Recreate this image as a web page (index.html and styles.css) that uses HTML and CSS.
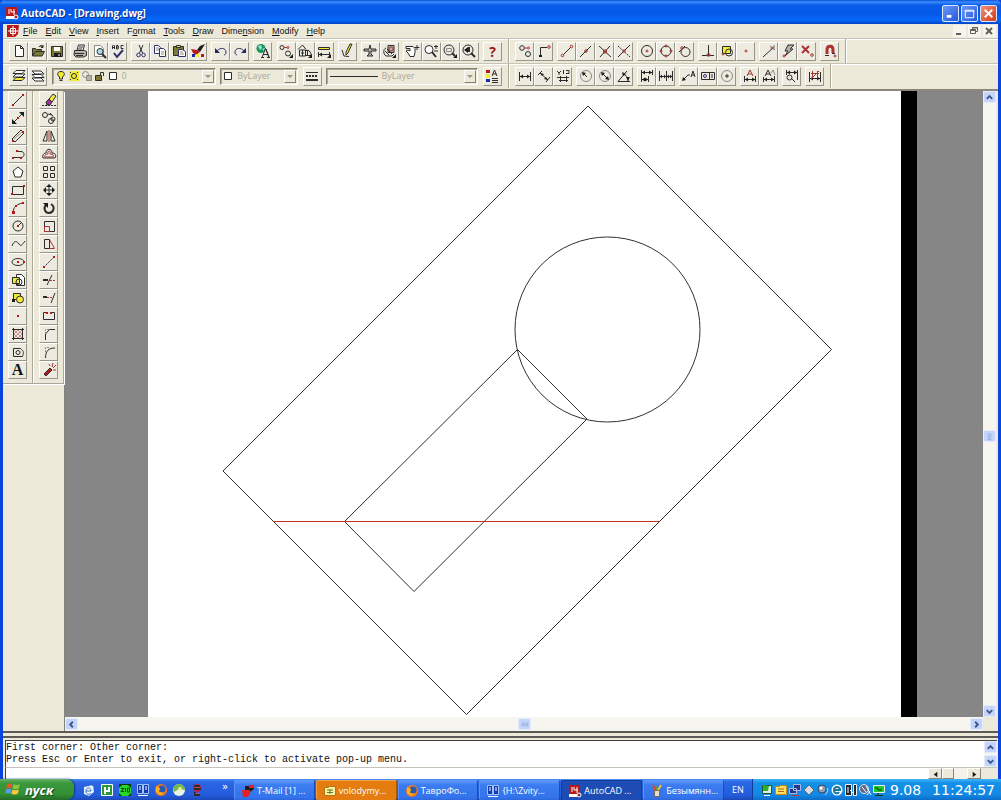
FILE: index.html
```html
<!DOCTYPE html>
<html lang="en">
<head>
<meta charset="utf-8">
<title>AutoCAD - [Drawing.dwg]</title>
<link rel="stylesheet" href="styles.css">
</head>
<body>
<div class="window">
  <header class="titlebar">
    <svg class="icon14" viewBox="0 0 14 14"><path class="fr" d="M1 1h11v11H1z"/><path class="w" d="M4 3v5M6 3v3h4M9 3v6"/><path class="fw" d="M1 10h8v3H1z"/><circle class="w" cx="11" cy="11" r="2"/></svg>
    <h1>AutoCAD - [Drawing.dwg]</h1>
    <button class="cap" aria-label="Minimize"><svg viewBox="0 0 16 16"><path class="w t3" d="M4 11h5"/></svg></button>
    <button class="cap" aria-label="Maximize"><svg viewBox="0 0 16 16"><path class="w" d="M3.500 4.500h9v8h-9zM3 5.500h10"/></svg></button>
    <button class="cap close" aria-label="Close"><svg viewBox="0 0 16 16"><path class="w t2" d="M4 4l8 8M12 4l-8 8"/></svg></button>
  </header>
  <nav class="menubar">
    <svg class="icon14" viewBox="0 0 14 14"><path class="fr" d="M1 1h12l-1 9-3 3H1z"/><path class="w" d="M7 2v10M2 7h10M4.500 4.500h5v5h-5z"/></svg>
    <button><u>F</u>ile</button><button><u>E</u>dit</button><button><u>V</u>iew</button><button><u>I</u>nsert</button><button>F<u>o</u>rmat</button><button><u>T</u>ools</button><button><u>D</u>raw</button><button>Dime<u>n</u>sion</button><button><u>M</u>odify</button><button><u>H</u>elp</button>
    <span class="grow"></span>
    <button class="mdi" aria-label="Minimize drawing"><svg viewBox="0 0 12 12"><path class="g t2" d="M3 9h5"/></svg></button>
    <button class="mdi" aria-label="Restore drawing"><svg viewBox="0 0 12 12"><path class="g" d="M4.500 4V2.500h5v4H8M2.500 4.500h5v4h-5zM2 5.500h6M4 3h6"/></svg></button>
    <button class="mdi" aria-label="Close drawing"><svg viewBox="0 0 12 12"><path class="g t2" d="M3 3l6 6M9 3l-6 6"/></svg></button>
  </nav>

  <div class="toolrow">
    <div class="toolbar standard">
      <div class="group">
        <button class="tb" aria-label="New"><svg viewBox="0 0 16 16"><path class="k fw" d="M4.500 2.500h5l3 3v8h-8zM9.500 2.500v3h3"/></svg></button>
        <button class="tb" aria-label="Open"><svg viewBox="0 0 16 16"><path class="k fo" d="M2.500 13V5.500h3l1 1h5V9M2.500 13l3-4.500h9L12 13zM9 4c1-2 3-2 4 0M13 2v2.500h-2"/></svg></button>
        <button class="tb" aria-label="Save"><svg viewBox="0 0 16 16"><path class="k fo" d="M2.500 3.500h11v10h-11z"/><path class="fw" d="M5 4h6v4H5z"/><path class="fk" d="M5 10h7v4H5z"/><path class="w" d="M10 11v2"/></svg></button>
      </div>
      <div class="group">
        <button class="tb" aria-label="Print"><svg viewBox="0 0 16 16"><path class="k fw" d="M5 7l1.500-5h6L11 7"/><path class="k fs" d="M2.500 7.500h10l2 1v4l-3 1.500H4L2 12z"/><path class="k" d="M3 10.500h9M7 4h4M6 6h4M4 12.500h7"/></svg></button>
        <button class="tb" aria-label="Print preview"><svg viewBox="0 0 16 16"><path class="s fw" d="M3.500 2.500h6l3 3v8h-9z"/><circle class="k fc" cx="9" cy="8.500" r="3"/><path class="k t2" d="M11 11l4 4"/></svg></button>
        <button class="tb" aria-label="Spelling"><svg viewBox="0 0 16 16"><path class="k" d="M2.500 6V3l1-1 1 1v3M2.500 4.500h2M6.500 6V2.500H8L8.500 4 8 6H6.500M6.500 4H8M13.500 2.500H11v3h2.500"/><path class="b t2" d="M4 10l3 4 6-7"/></svg></button>
      </div>
      <div class="group">
        <button class="tb" aria-label="Cut"><svg viewBox="0 0 16 16"><path class="k" d="M6 2l3.500 8M10 2L6.500 10"/><circle class="b" cx="5.500" cy="12" r="1.800"/><circle class="b" cx="10.500" cy="12" r="1.800"/></svg></button>
        <button class="tb" aria-label="Copy"><svg viewBox="0 0 16 16"><path class="b fw" d="M2.500 2.500h4l2 2v6h-6z"/><path class="b fw" d="M7.500 5.500h4l2 2v6h-6z"/><path class="s" d="M4 5h3M4 7h3M9 9h3M9 11h3"/></svg></button>
        <button class="tb" aria-label="Paste"><svg viewBox="0 0 16 16"><path class="k fo" d="M2.500 3.500h10v9h-10z"/><path class="k fy" d="M5.500 2.500h4v2h-4z"/><path class="b fw" d="M7.500 6.500h4l3 2v5h-7z"/><path class="s" d="M9 9h3M9 11h4"/></svg></button>
        <button class="tb" aria-label="Match properties"><svg viewBox="0 0 16 16"><path class="fk" d="M15 1l-5 8-3-2 3-4z"/><path class="fr" d="M1 6l6 1 3 2-4 3-3-2z"/><path class="fb" d="M2 11h3v3H2z"/><path class="fy" d="M6 11h3v3H6z"/><path class="fr" d="M11 11h3v3h-3z"/></svg></button>
      </div>
      <div class="group">
        <button class="tb" aria-label="Undo"><svg viewBox="0 0 16 16"><path class="b" d="M4 8c3-4 9-3 9 1 0 2-1 3-2 3"/><path class="bk" d="M2 5v5h5z"/></svg></button>
        <button class="tb" aria-label="Redo"><svg viewBox="0 0 16 16"><path class="b" d="M12 8C9 4 3 5 3 9c0 2 1 3 2 3"/><path class="bk" d="M14 5v5H9z"/></svg></button>
      </div>
      <div class="group">
        <button class="tb" aria-label="Launch browser"><svg viewBox="0 0 16 16"><circle class="fgn" cx="6" cy="5.500" r="4.500"/><path class="fc" d="M3 3l3-1 1 3-2 2zM7 6l3-1-1 3z"/><path class="k" d="M7 14.500l3.500-9 3.500 9M8 11.500h5M6 14.500h3M12 14.500h3M11 6l3 8"/></svg></button>
      </div>
      <div class="group">
        <button class="tb" aria-label="Object snap"><svg viewBox="0 0 16 16"><circle class="k" cx="4" cy="4.500" r="2"/><circle class="k" cx="10" cy="10.500" r="2.500"/><circle class="r" cx="10" cy="4.500" r="1"/><path class="r" d="M6 4.500h3"/><path class="fk" d="M15 11v4h-4z"/></svg></button>
        <button class="tb" aria-label="UCS"><svg viewBox="0 0 16 16"><path class="k" d="M1 6.500L5.500 2 9 6.500M2.500 7h6v6h-6zM4 10h3M5.500 7v6M9 7.500h3l2 3v2H9M10.500 8v4"/><path class="fk" d="M15 11v4h-4z"/></svg></button>
        <button class="tb" aria-label="Distance"><svg viewBox="0 0 16 16"><path class="k fy" d="M2.500 4.500h11v2h-11z"/><path class="k" d="M2.500 9v5M13.500 9v4M3 11.500h10"/><path class="fk" d="M3 11.500l3-2v4zM15 11v4h-4z"/></svg></button>
      </div>
      <div class="group">
        <button class="tb" aria-label="Redraw"><svg viewBox="0 0 16 16"><path class="k fy" d="M13 1L9 10l-2 2V9l4-8z"/><path class="k" d="M3 7l2 6 5 .5"/></svg></button>
      </div>
      <div class="group">
        <button class="tb" aria-label="Aerial view"><svg viewBox="0 0 16 16"><path class="k fs" d="M8 2l1 4h5v2H9v3l2 2H5l2-2V8H2V6h5z"/></svg></button>
        <button class="tb" aria-label="Named views"><svg viewBox="0 0 16 16"><path class="k fs" d="M7 2.500h6v7H7z"/><path class="k" d="M5 5c-3 1-3 6 0 8h6l2-2M4 8l4 4M6 6l5 5"/><circle class="r" cx="10" cy="6" r="2"/><path class="fk" d="M15 11v4h-4z"/></svg></button>
      </div>
      <div class="group">
        <button class="tb" aria-label="Pan"><svg viewBox="0 0 16 16"><path class="k fw" d="M2 3.500h7l2 2v4l-1 4H6L4 10 2 8l2-1 2 1V5.500H2z"/><path class="k" d="M13 2v5M10.500 4.500h5"/></svg></button>
        <button class="tb" aria-label="Zoom realtime"><svg viewBox="0 0 16 16"><circle class="k fw" cx="6" cy="6.500" r="4"/><path class="k t2" d="M9 9l4 5"/><path class="k" d="M11 3.500h4M13 2v4M11 8h4"/></svg></button>
        <button class="tb" aria-label="Zoom window"><svg viewBox="0 0 16 16"><circle class="k" cx="7" cy="7" r="5"/><path class="s" d="M4.500 5.500h5v3h-5z"/><path class="k t2" d="M10 10l3 3"/><path class="fk" d="M15 11v4h-4z"/></svg></button>
        <button class="tb" aria-label="Zoom previous"><svg viewBox="0 0 16 16"><circle class="k" cx="7" cy="7" r="5"/><path class="k t2" d="M10 10l4 4M8 4v5"/><path class="fk" d="M3 7l4-3v6z"/></svg></button>
      </div>
      <div class="group">
        <button class="tb help" aria-label="Help">?</button>
      </div>
    </div>
    <div class="toolbar snap">
      <div class="group">
        <button class="tb" aria-label="Tracking"><svg viewBox="0 0 16 16"><circle class="k" cx="5" cy="5" r="2.300"/><circle class="k" cx="11" cy="11" r="2.500"/><circle class="r" cx="11.500" cy="5" r="1"/><path class="r" d="M7 5h3"/></svg></button>
        <button class="tb" aria-label="Snap from"><svg viewBox="0 0 16 16"><path class="k" d="M4.500 13V4.500H11"/><path class="fk" d="M3 12h3v2H3z"/><circle class="r" cx="13" cy="4" r="1.300"/></svg></button>
      </div>
      <div class="group">
        <button class="tb" aria-label="Endpoint"><svg viewBox="0 0 16 16"><path class="k" d="M4 12l8-8"/><circle class="r" cx="3.500" cy="12.500" r="1.300"/><circle class="r" cx="12.500" cy="3.500" r="1.300"/></svg></button>
        <button class="tb" aria-label="Midpoint"><svg viewBox="0 0 16 16"><path class="k" d="M2 14L13 3"/><circle class="r" cx="8" cy="8" r="1.300"/></svg></button>
        <button class="tb" aria-label="Intersection"><svg viewBox="0 0 16 16"><path class="k" d="M2 3l12 11M13 3L3 14"/><path class="r" d="M6.500 7h3v3h-3z"/></svg></button>
        <button class="tb" aria-label="Apparent intersection"><svg viewBox="0 0 16 16"><path class="k dash" d="M2 3l12 11"/><path class="k" d="M14 2L2 14"/><path class="r" d="M7 7h2v2H7z"/></svg></button>
      </div>
      <div class="group">
        <button class="tb" aria-label="Center"><svg viewBox="0 0 16 16"><circle class="k" cx="8" cy="8" r="5.500"/><circle class="r" cx="8" cy="8" r="1"/></svg></button>
        <button class="tb" aria-label="Quadrant"><svg viewBox="0 0 16 16"><circle class="k" cx="8" cy="8" r="5"/><circle class="r" cx="8" cy="3" r="1"/><circle class="r" cx="8" cy="13" r="1"/><circle class="r" cx="3" cy="8" r="1"/><circle class="r" cx="13" cy="8" r="1"/></svg></button>
        <button class="tb" aria-label="Tangent"><svg viewBox="0 0 16 16"><circle class="k" cx="8.500" cy="9" r="4.500"/><path class="k" d="M2 9l6-6"/><circle class="r" cx="5" cy="5" r="1.300"/></svg></button>
      </div>
      <div class="group">
        <button class="tb" aria-label="Perpendicular"><svg viewBox="0 0 16 16"><path class="k" d="M2 12.500h12M8.500 2v10"/><path class="r" d="M7 11h3v2H7z"/></svg></button>
        <button class="tb" aria-label="Insert snap"><svg viewBox="0 0 16 16"><path class="k fy" d="M3.500 3.500h8v7h-8z"/><circle class="k" cx="10" cy="9.500" r="3.500"/><circle class="r" cx="4" cy="11" r="1"/></svg></button>
        <button class="tb" aria-label="Node"><svg viewBox="0 0 16 16"><circle class="r" cx="8" cy="8" r="1"/></svg></button>
      </div>
      <div class="group">
        <button class="tb" aria-label="Nearest"><svg viewBox="0 0 16 16"><path class="k" d="M2 14L13 4"/><circle class="r" cx="11" cy="5" r="1"/><path class="s" d="M9 3l5 4M13 2v5"/></svg></button>
        <button class="tb" aria-label="Quick"><svg viewBox="0 0 16 16"><path class="k fs" d="M8 2h6l-4 4h3L5 13l3-5H5z"/><circle class="r" cx="4" cy="13" r="1"/></svg></button>
        <button class="tb" aria-label="None"><svg viewBox="0 0 16 16"><path class="r t2" d="M3 3l7 7M10 3l-7 7"/><circle class="r" cx="13" cy="12" r="1.300"/></svg></button>
      </div>
      <div class="group">
        <button class="tb" aria-label="Object snap settings"><svg viewBox="0 0 16 16"><path class="r t3" d="M5 11V7c0-5 6-5 6 0v3"/><path class="k" d="M3 12.500h4M10 10.500h3"/><circle class="r" cx="13" cy="13" r="1"/></svg></button>
      </div>
    </div>
  </div>

  <div class="toolrow">
    <div class="toolbar props">
      <div class="group">
        <button class="tb" aria-label="Make object's layer current"><svg viewBox="0 0 16 16"><path class="k fy" d="M2 12.500l3-3h9l-3 3z"/><path class="k fw" d="M2 9l3-3h9l-3 3zM2 5.500l3-3h9l-3 3z"/></svg></button>
        <button class="tb" aria-label="Layers"><svg viewBox="0 0 16 16"><path class="k fw" d="M5 13l-3-3h9l3 3zM5 9.500l-3-3h9l3 3zM5 6L2 3h9l3 3z"/></svg></button>
      </div>
      <label class="combo layer">
        <svg viewBox="0 0 12 12"><path class="k fy" d="M4.500 9V7C1 4 3 1.500 6 1.500S11 4 7.500 7v2z"/><path class="k" d="M4.500 10.500h3"/></svg>
        <svg viewBox="0 0 12 12"><path class="fy" d="M1 1h10v10H1z"/><circle class="k" cx="6" cy="6" r="2.500"/><path class="k" d="M2 2l1 1M10 2L9 3M2 10l1-1M10 10L9 9"/></svg>
        <svg viewBox="0 0 12 12"><circle class="s" cx="4.500" cy="4.500" r="3"/><path class="s fs" d="M5.500 5.500h5v5h-5z"/></svg>
        <svg viewBox="0 0 12 12"><path class="k fo" d="M1.500 5.500h6v5h-6z"/><path class="k" d="M6.500 5V2.500h3V6"/></svg>
        <svg viewBox="0 0 12 12"><path class="k fw" d="M2.500 2.500h7v7h-7z"/></svg>
        <select aria-label="Layer" disabled><option>0</option></select><span class="drop"></span>
      </label>
      <label class="combo color">
        <svg viewBox="0 0 12 12"><path class="k fw" d="M2.500 2.500h7v7h-7z"/></svg>
        <select aria-label="Color" disabled><option>ByLayer</option></select><span class="drop"></span>
      </label>
      <button class="tb" aria-label="Linetype"><svg viewBox="0 0 16 16"><path class="k" d="M2 4.500h12"/><path class="k t2 dash" d="M2 8h12"/><path class="k t2" d="M2 12h12"/></svg></button>
      <label class="combo line">
        <svg class="sample" viewBox="0 0 50 12"><path class="k" d="M2 6.500h48"/></svg>
        <select aria-label="Linetype" disabled><option>ByLayer</option></select><span class="drop"></span>
      </label>
      <button class="tb" aria-label="Properties"><svg viewBox="0 0 16 16"><path class="fr" d="M2 2h4v3H2z"/><path class="fy" d="M2 6h4v4H2z"/><path class="fb" d="M2 11h4v3H2z"/><path class="k" d="M8 8l2.500-6L13 8M9 6h3M8 10.500h6M8 12.500h6M8 14.500h6"/></svg></button>
    </div>
    <div class="toolbar dims">
      <div class="group">
        <button class="tb" aria-label="Linear dimension"><svg viewBox="0 0 16 16"><path class="k" d="M2.500 4v9M13.500 4v9M3 8.500h10"/><path class="fk" d="M3 8.500l3-2v4zM13 8.500l-3-2v4z"/></svg></button>
        <button class="tb" aria-label="Aligned dimension"><svg viewBox="0 0 16 16"><path class="k" d="M2 7l4-4M10 14l4-5M4 5l8 7"/><path class="fk" d="M4 5l4 1-2 2zM12 12L8 11l2-2z"/></svg></button>
        <button class="tb" aria-label="Ordinate dimension"><svg viewBox="0 0 16 16"><path class="k" d="M2 9.500h12M4 12.500h9M5.500 8v6M11.500 8v6M8.500 2v4M2 3l2 2 2-2M4 5v2M11 2.500h3v3h-3"/></svg></button>
      </div>
      <div class="group">
        <button class="tb" aria-label="Radius dimension"><svg viewBox="0 0 16 16"><circle class="s" cx="8" cy="8" r="5.500"/><path class="k" d="M5 5l4 4"/><path class="fk" d="M4 4l4 1-3 3z"/></svg></button>
        <button class="tb" aria-label="Diameter dimension"><svg viewBox="0 0 16 16"><circle class="s" cx="8" cy="8" r="5.500"/><path class="k" d="M5 5l6 6"/><path class="fk" d="M4 4l4 1-3 3zM12 12l-4-1 3-3z"/></svg></button>
        <button class="tb" aria-label="Angular dimension"><svg viewBox="0 0 16 16"><path class="k" d="M14 13.500H2L11 3M7 6c3 1 5 3 5 7"/><path class="fk" d="M6 4l4 2-3 2zM10 9h4l-2 4z"/></svg></button>
      </div>
      <div class="group">
        <button class="tb" aria-label="Baseline dimension"><svg viewBox="0 0 16 16"><path class="k" d="M2.500 2v12M13.500 2v5M9.500 8v6M3 4.500h10M3 11.500h6"/><path class="fk" d="M3 4.500l3-2v4zM13 4.500l-3-2v4zM3 11.500l3-2v4zM9 11.500l-3-2v4z"/></svg></button>
        <button class="tb" aria-label="Continue dimension"><svg viewBox="0 0 16 16"><path class="k" d="M1.500 3v10M8.500 3v10M14.500 3v10M2 8.500h12"/><path class="fk" d="M2 8.500l2-2v4zM8 8.500l-2-2v4zM9 8.500l2-2v4zM14 8.500l-2-2v4z"/></svg></button>
      </div>
      <div class="group">
        <button class="tb" aria-label="Leader"><svg viewBox="0 0 16 16"><path class="k" d="M2 12l5-5h2M10 9l2-6 2 6M11 7h3"/><path class="fk" d="M1 13l1-4 3 3z"/></svg></button>
        <button class="tb" aria-label="Tolerance"><svg viewBox="0 0 16 16"><path class="k" d="M1.500 4.500h13v7h-13zM9.500 5v6M12 6v4"/><circle class="b" cx="5" cy="8" r="1.500"/></svg></button>
        <button class="tb" aria-label="Center mark"><svg viewBox="0 0 16 16"><circle class="s" cx="8" cy="8" r="5.500"/><path class="k" d="M8 6v4M6 8h4"/></svg></button>
      </div>
      <div class="group">
        <button class="tb" aria-label="Dimension edit"><svg viewBox="0 0 16 16"><path class="r" d="M5 8l3-6 3 6M6 6h4"/><path class="k" d="M2.500 8v6M13.500 8v6M3 11.500h10"/><path class="fk" d="M3 11.500l3-2v4zM13 11.500l-3-2v4z"/></svg></button>
        <button class="tb" aria-label="Dimension text edit"><svg viewBox="0 0 16 16"><path class="k" d="M4 8l3-6 3 6M5 6h4M2.500 9v5M13.500 8v6M3 11.500h10"/><path class="s" d="M10 5l2-3 2 5"/><path class="fk" d="M3 11.500l3-2v4zM13 11.500l-3-2v4z"/></svg></button>
      </div>
      <div class="group">
        <button class="tb" aria-label="Dimension style"><svg viewBox="0 0 16 16"><path class="k" d="M2.500 2v5M13.500 2v10M3 4.500h10M7 10l4 4"/><circle class="k" cx="5.500" cy="9.500" r="2.500"/><path class="fk" d="M3 4.500l3-2v4zM13 4.500l-3-2v4z"/></svg></button>
      </div>
      <div class="group">
        <button class="tb" aria-label="Dimension update"><svg viewBox="0 0 16 16"><path class="k" d="M2.500 4v10M13.500 4v10M3 10.500h10"/><path class="fk" d="M3 10.500l3-2v4zM13 10.500l-3-2v4z"/><path class="r" d="M5.500 3v7M10.500 3v7M4 5.500h8M12 3l-8 8"/></svg></button>
      </div>
    </div>
  </div>

  <main class="workspace">
    <aside class="palettes">
      <div class="palette">
        <button class="tb" aria-label="Line"><svg viewBox="0 0 16 16"><path class="k" d="M4 12l9-9"/><path class="fr" d="M2 12h2v2H2zM12 2h2v2h-2z"/></svg></button>
        <button class="tb" aria-label="Construction line"><svg viewBox="0 0 16 16"><path class="k" d="M3 13L13 3"/><path class="fk" d="M2 14v-5l5 5zM14 2v5L9 2z"/><path class="fr" d="M7 7h2v2H7z"/></svg></button>
        <button class="tb" aria-label="Multiline"><svg viewBox="0 0 16 16"><path class="k" d="M2 11l9-9 3 3-9 9z"/><path class="s" d="M4 11l8-7"/><path class="fr" d="M2 12h2v2H2zM12 3h2v2h-2z"/></svg></button>
        <button class="tb" aria-label="Polyline"><svg viewBox="0 0 16 16"><path class="k" d="M2 11.500h9c4 0 4-6 0-6H7"/><path class="fr" d="M2 11h2v2H2zM10 11h2v2h-2zM6 4h2v2H6z"/></svg></button>
        <button class="tb" aria-label="Polygon"><svg viewBox="0 0 16 16"><path class="k fw" d="M8 3l5 4-2 6H5L3 7z"/></svg></button>
        <button class="tb" aria-label="Rectangle"><svg viewBox="0 0 16 16"><path class="k" d="M2.500 4.500h11v8h-11z"/><path class="fr" d="M1 11h2v2H1zM13 3h2v2h-2z"/></svg></button>
        <button class="tb" aria-label="Arc"><svg viewBox="0 0 16 16"><path class="k" d="M3 13c0-6 4-9 10-10"/><path class="fr" d="M2 11h3v3H2zM5 5h2v2H5zM12 2h2v2h-2z"/></svg></button>
        <button class="tb" aria-label="Circle"><svg viewBox="0 0 16 16"><circle class="k" cx="8" cy="8" r="5"/><path class="k" d="M8 8l3-3"/><path class="fr" d="M7 7h2v2H7z"/></svg></button>
        <button class="tb" aria-label="Spline"><svg viewBox="0 0 16 16"><path class="k" d="M2 10c2-6 5-5 7-2s3 1 6-3"/></svg></button>
        <button class="tb" aria-label="Ellipse"><svg viewBox="0 0 16 16"><ellipse class="k" cx="8" cy="8" rx="6" ry="3.500"/><path class="fr" d="M7 7h2v2H7zM7 4h2v1H7zM13 7h2v2h-2z"/></svg></button>
        <button class="tb" aria-label="Insert block"><svg viewBox="0 0 16 16"><path class="k fw" d="M6.500 2.500h5l3 3v8h-8z"/><path class="k fy" d="M2.500 5.500h7v6h-7z"/><circle class="k" cx="9" cy="10" r="3"/></svg></button>
        <button class="tb" aria-label="Make block"><svg viewBox="0 0 16 16"><path class="k fy" d="M3.500 3.500h7v6h-7z"/><circle class="k fy" cx="10" cy="9.500" r="3.500"/><path class="fk" d="M2 9h3v3H2z"/></svg></button>
        <button class="tb" aria-label="Point"><svg viewBox="0 0 16 16"><path class="fr" d="M7 7h2v2H7z"/></svg></button>
        <button class="tb" aria-label="Hatch"><svg viewBox="0 0 16 16"><path class="r thin" d="M4 8l4-4M4 12l8-8M8 12l4-4M4 8l4 4M4 4l8 8M8 4l4 4"/><path class="k" d="M3.500 2v12M12.500 2v12M2 3.500h12M2 12.500h12"/></svg></button>
        <button class="tb" aria-label="Region"><svg viewBox="0 0 16 16"><path class="k" d="M3.500 4.500h7c4 3 3 5 2 8h-9z"/><circle class="k" cx="8" cy="8.500" r="2"/></svg></button>
        <button class="tb letter" aria-label="Text">A</button>
      </div>
      <div class="palette modify">
        <button class="tb" aria-label="Erase"><svg viewBox="0 0 16 16"><path class="k dash" d="M1 13.500h14"/><path class="k fp" d="M5 10l3-3 3 3-2 3H6z"/><path class="k fy" d="M8 7l4-5 3 2-4 6z"/></svg></button>
        <button class="tb" aria-label="Copy object"><svg viewBox="0 0 16 16"><circle class="k" cx="4" cy="5" r="2.500"/><circle class="k" cx="10" cy="11" r="2.500"/><circle class="k" cx="12" cy="9" r="2"/><path class="k" d="M7 4l4 1M9 3l3 3"/></svg></button>
        <button class="tb" aria-label="Mirror"><svg viewBox="0 0 16 16"><path class="k" d="M6 3v10H2zM10 3v10h4z"/><path class="r" d="M8 2v12"/></svg></button>
        <button class="tb" aria-label="Offset"><svg viewBox="0 0 16 16"><path class="k" d="M2 12c-1-3 1-5 3-5 0-5 6-5 6 0 3 0 5 2 3 5z"/><path class="r" d="M4 11c-1-2 1-3 3-3-1-4 3-4 2 0 3 0 4 1 3 3z"/></svg></button>
        <button class="tb" aria-label="Array"><svg viewBox="0 0 16 16"><path class="k" d="M2.500 2.500h4v4h-4zM9.500 2.500h4v4h-4zM2.500 9.500h4v4h-4zM9.500 9.500h4v4h-4z"/></svg></button>
        <button class="tb" aria-label="Move"><svg viewBox="0 0 16 16"><path class="k" d="M8 3v10M3 8h10"/><path class="fk" d="M8 2l3 3H5zM8 14l-3-3h6zM2 8l3-3v6zM14 8l-3 3V5z"/></svg></button>
        <button class="tb" aria-label="Rotate"><svg viewBox="0 0 16 16"><path class="k t2" d="M10 4c5 3 2 9-2 9s-6-5-3-8"/><path class="fk" d="M2 3h5v5z"/></svg></button>
        <button class="tb" aria-label="Scale"><svg viewBox="0 0 16 16"><path class="k" d="M3.500 3.500h10v10h-10z"/><path class="r" d="M3.500 8.500h5v5h-5z"/></svg></button>
        <button class="tb" aria-label="Stretch"><svg viewBox="0 0 16 16"><path class="k" d="M3.500 3.500h5v9h-5z"/><path class="r" d="M8.500 3.500l5 9h-5"/></svg></button>
        <button class="tb" aria-label="Lengthen"><svg viewBox="0 0 16 16"><path class="k dash" d="M3 13L13 3"/><path class="fr" d="M2 12h2v2H2zM12 2h2v2h-2z"/></svg></button>
        <button class="tb" aria-label="Trim"><svg viewBox="0 0 16 16"><path class="k t2" d="M2 8h5"/><path class="k" d="M6 13l5-10"/><path class="r dash" d="M9 8.500h5"/></svg></button>
        <button class="tb" aria-label="Extend"><svg viewBox="0 0 16 16"><path class="k t2" d="M2 7h4"/><path class="r dash" d="M6 7.500h5"/><path class="k" d="M10 13l4-10"/></svg></button>
        <button class="tb" aria-label="Break"><svg viewBox="0 0 16 16"><path class="k" d="M5 4.500H2.500v7h11v-7H11"/><path class="fr" d="M5 4h2v2H5zM9 4h2v2H9z"/></svg></button>
        <button class="tb" aria-label="Chamfer"><svg viewBox="0 0 16 16"><path class="k" d="M4.500 14V8l4-4.500H14"/><path class="s dash" d="M4.500 8V3.500H9"/></svg></button>
        <button class="tb" aria-label="Fillet"><svg viewBox="0 0 16 16"><path class="k" d="M4.500 14c0-7 3-10 9.500-10"/><path class="s dash" d="M4.500 8V3.500H9"/></svg></button>
        <button class="tb" aria-label="Explode"><svg viewBox="0 0 16 16"><path class="k fr" d="M3 12l6-6 2 2-6 6z"/><path class="r" d="M11 5l1-4M12 6l3-3M12 8h3M9 4L8 2"/></svg></button>
      </div>
    </aside>
    <section class="view">
      <div class="sheet">
        <svg class="drawing" viewBox="148 91 753 626" role="img" aria-label="Drawing">
          <path d="M588 106L831.500 349.500 466.500 714.500 223 471z"/>
          <path d="M517.500 349.500L587 419 414 591.500 344.500 521.500z"/>
          <circle cx="607.500" cy="329.500" r="92.500"/>
          <path class="cut" d="M273 521.500h386"/>
        </svg>
      </div>
      <div class="vscroll">
        <button aria-label="Scroll up"><svg viewBox="0 0 12 12"><path d="M3 7.500l3-3 3 3"/></svg></button>
        <button class="thumb" aria-label="Vertical position"><svg viewBox="0 0 12 12"><path class="grip" d="M4 3.500h4M4 5.500h4M4 7.500h4M4 9.500h4"/></svg></button>
        <button aria-label="Scroll down"><svg viewBox="0 0 12 12"><path d="M3 4.500l3 3 3-3"/></svg></button>
      </div>
      <div class="hscroll">
        <button aria-label="Scroll left"><svg viewBox="0 0 12 12"><path d="M7.500 3l-3 3 3 3"/></svg></button>
        <button class="thumb" aria-label="Horizontal position"><svg viewBox="0 0 12 12"><path class="grip" d="M3.500 4v4M5.500 4v4M7.500 4v4M9.500 4v4"/></svg></button>
        <button aria-label="Scroll right"><svg viewBox="0 0 12 12"><path d="M4.500 3l3 3-3 3"/></svg></button>
      </div>
    </section>
  </main>

  <section class="command">
    <div class="log">
      <div class="lines"><p>First corner: Other corner:</p><p>Press Esc or Enter to exit, or right-click to activate pop-up menu.</p></div>
      <div class="vscroll">
        <button aria-label="Previous line"><svg viewBox="0 0 12 12"><path d="M3 7.500l3-3 3 3"/></svg></button>
        <button aria-label="Next line"><svg viewBox="0 0 12 12"><path d="M3 4.500l3 3 3-3"/></svg></button>
      </div>
    </div>
    <div class="entry">
      <input type="text" aria-label="Command">
      <div class="classic">
        <button aria-label="Left"><svg viewBox="0 0 12 12"><path class="fk" d="M4 6l4-3v6z"/></svg></button>
        <button class="slide" aria-label="Slider"></button>
        <span class="rail"></span>
        <button aria-label="Right"><svg viewBox="0 0 12 12"><path class="fk" d="M8 6L4 3v6z"/></svg></button>
        <span class="corner"></span>
      </div>
    </div>
  </section>
</div>

<footer class="taskbar">
  <button class="start"><svg viewBox="0 0 16 16"><path fill="#e8542c" d="M2 3c2-1 4-1 5 0L6 7C5 6 3 6 1 7z"/><path fill="#8cc63f" d="M8 3c2 1 4 1 6 0l-1 4c-2 1-4 1-6 0z"/><path fill="#5a9cf0" d="M1 8c2-1 4-1 5 0l-1 4c-1-1-3-1-5 0z"/><path fill="#ffc83c" d="M7 8c2 1 4 1 6 0l-1 4c-2 1-4 1-6 0z"/></svg><span>пуск</span></button>
  <div class="quick">
    <button aria-label="Explorer"><svg viewBox="0 0 14 14"><path fill="#e8f0f8" d="M2 4l9-2 1 7-5 4-5-2z"/><path stroke="#3878c0" d="M4 8h5c0-4-5-4-5 0s4 4 5 2M10 3l2-2"/></svg></button>
    <button aria-label="Torrent"><svg viewBox="0 0 14 14"><path fill="#2c9a34" stroke="#fff" d="M1.500 1.500h11v11h-11z"/><path class="w t2" d="M5 11V4M5 4v4h4V4M9 8h1"/></svg></button>
    <button aria-label="ICQ"><svg viewBox="0 0 14 14"><path fill="#083c10" d="M1 1h12v12H1z"/><path fill="#28d828" d="M1 5l3-3h6l3 3v5l-3 3H4l-3-3z"/><path stroke="#083c10" d="M3 5.500h3l-3 3h3M7.500 5v4M9.500 5v4h2V5z"/></svg></button>
    <button aria-label="Commander"><svg viewBox="0 0 14 14"><path fill="#1838b0" stroke="#9ac8ff" d="M1.500 1.500h5v9h-5zM7.500 1.500h5v9h-5z"/><path class="w" d="M3 4h2M3 6h2M9 4h2M9 6h2M2 12.500h10"/></svg></button>
    <button aria-label="Firefox"><svg viewBox="0 0 14 14"><circle fill="#f07818" cx="7" cy="7" r="6"/><circle fill="#2858b0" cx="8" cy="6" r="3.500"/><path fill="#ffb020" d="M2 3l4 2-1 4 5 1-4 2-4-3z"/></svg></button>
    <button aria-label="Chrome"><svg viewBox="0 0 14 14"><circle fill="#e8f4e8" cx="7" cy="7" r="6"/><path fill="#70b850" d="M7 1c4 0 6 3 6 6L7 6 2 9c-2-4 1-8 5-8z"/><circle fill="#f8e8a0" cx="8" cy="6" r="2"/></svg></button>
    <button aria-label="Messenger"><svg viewBox="0 0 14 14"><circle fill="#c02040" cx="7" cy="5" r="4"/><path class="k t2" d="M4 3h6M4 6h7M5 9v3h5"/><path stroke="#e03858" d="M5 4.500h5M5 10.500h5"/></svg></button>
  </div>
  <button class="more" aria-label="More">»</button>
  <div class="tasks">
    <button class="task"><svg viewBox="0 0 14 14"><path class="fk" d="M4 2h9v3l-4 3-3 5H4z"/><path fill="#e82020" d="M1 6h8v3L7 13H2zM8 1h5v3H8z"/></svg><span>T-Mail [1] ...</span></button>
    <button class="task alert"><svg viewBox="0 0 14 14"><path fill="#fff0a0" stroke="#a87818" d="M1.500 3.500h4l1-1h6v9h-11z"/><path stroke="#588038" d="M4 6h6M4 8.500h6M7 5v5"/></svg><span>volodymy...</span></button>
    <button class="task"><svg viewBox="0 0 14 14"><circle fill="#f07818" cx="7" cy="7" r="6"/><circle fill="#2858b0" cx="8" cy="6" r="3.500"/><path fill="#ffb020" d="M2 3l4 2-1 4 5 1-4 2-4-3z"/></svg><span>ТавроФо...</span></button>
    <button class="task"><svg viewBox="0 0 14 14"><path fill="#1838b0" stroke="#9ac8ff" d="M1.500 1.500h5v9h-5zM7.500 1.500h5v9h-5z"/><path class="w" d="M3 4h2M3 6h2M9 4h2M9 6h2M2 12.500h10"/></svg><span>{H:\Zvity...</span></button>
    <button class="task active"><svg viewBox="0 0 14 14"><path class="fr" d="M1 1h11v11H1z"/><path class="w" d="M4 3v5M6 3v3h4M9 3v6"/><path class="fw" d="M1 10h8v3H1z"/><circle class="w" cx="11" cy="11" r="2"/></svg><span>AutoCAD ...</span></button>
    <button class="task"><svg viewBox="0 0 14 14"><path fill="#e8e0c8" stroke="#706858" d="M4.500 6.500h5v6h-5z"/><path stroke="#e04828" stroke-width="2" d="M5 6L3 1"/><path stroke="#f0c040" stroke-width="2" d="M8 6l3-5"/><path stroke="#58a048" d="M6.500 6V2"/></svg><span>Безымянн...</span></button>
  </div>
  <span class="lang">EN</span>
  <div class="tray">
    <svg viewBox="0 0 14 14"><path fill="#e0f0e0" stroke="#185838" d="M2.500 2.500h9v8h-9z"/><path fill="#30b030" d="M3 2l6 1-1 5H3z"/><path class="w" d="M4 12.500h6"/></svg>
    <svg viewBox="0 0 14 14"><path fill="#ffe060" stroke="#c08818" d="M1.500 3.500h4l1-1h6v9h-11z"/><path stroke="#a86818" d="M4 6h6M4 8.500h6"/></svg>
    <svg viewBox="0 0 14 14"><path fill="#283888" stroke="#a8b8e8" d="M5.500 1.500h7v6h-7zM1.500 5.500h7v5h-7z"/><path stroke="#c03848" d="M4 12.500h7"/></svg>
    <svg viewBox="0 0 14 14"><path fill="#d8dce0" stroke="#586878" d="M7 2l5 5-5 5-5-5z"/></svg>
    <svg viewBox="0 0 14 14"><circle fill="#98a0b0" stroke="#384868" cx="6" cy="6" r="4"/><circle class="fw" cx="5" cy="5" r="1.500"/><path stroke="#d8e8f8" d="M11 5c2 2 0 5-2 7"/></svg>
    <svg viewBox="0 0 14 14"><circle fill="#fff" cx="7" cy="7" r="5.500"/><path stroke="#1878a0" stroke-width="2" d="M4 7h6c0-4-6-4-6 0s4 4 5 2"/></svg>
    <svg viewBox="0 0 14 14"><path fill="#202838" stroke="#f0f0f0" d="M1.500 1.500h6v11h-6zM9.500 1.500h3v11h-3z"/><path class="w" d="M4 4v6M6 7l4 4"/></svg>
    <svg viewBox="0 0 14 14"><circle fill="#606888" stroke="#e0e0e8" cx="6" cy="6" r="4.500"/><path class="w" d="M4 4l4 5M8 3l5 9M9 12l3-4"/></svg>
    <svg viewBox="0 0 14 14"><path fill="#20c830" stroke="#e8f0e8" d="M1.500 2.500h11v7h-11z"/><path stroke="#083808" d="M3 5h3v2h4M6 10v2M3 12.500h8"/></svg>
    <time class="clock"><span>9.08</span><span>11:24:57</span></time>
  </div>
</footer>
</body>
</html>
```
FILE: styles.css
```css
* { box-sizing: border-box; }

body {
  margin: 0;
  height: 100vh;
  display: flex;
  flex-direction: column;
  font-family: "Open Sans", "Noto Sans", sans-serif;
  font-size: 9px;
  color: #111;
  background: #ece9d8;
  overflow: hidden;
}

button, input, select { font: inherit; color: inherit; margin: 0; padding: 0; border: 0; background: none; border-radius: 0; }
h1, p { margin: 0; }
svg { display: block; fill: none; flex: none; }

/* icon paint */
.k { stroke: #2c2c2c; }
.r { stroke: #a83434; }
.b { stroke: #30306c; }
.s { stroke: #8a8a84; }
.w { stroke: #fff; }
.g { stroke: #605f58; }
.t2 { stroke-width: 2; }
.t3 { stroke-width: 3; }
.thin { stroke-opacity: 0.5; }
.dash { stroke-dasharray: 2 1; }
.fk { fill: #1c1c1c; }
.bk { fill: #28285c; }
.fr { fill: #b81818; }
.fw { fill: #fff; }
.fy { fill: #f0ea38; }
.fo { fill: #7c7a34; }
.fs { fill: #b4b4ac; }
.fb { fill: #2028b0; }
.fc { fill: #a8e0e8; }
.fgn { fill: #189858; }
.fp { fill: #a030a0; }
.icon14 { width: 14px; height: 14px; }

.window {
  flex: 1;
  min-height: 0;
  display: flex;
  flex-direction: column;
  border: solid #0a44dc;
  border-width: 0 3px;
  background: #ece9d8;
}

.titlebar {
  flex: none;
  height: 24px;
  margin: 0 -3px;
  padding: 2px 4px 0 5px;
  display: flex;
  align-items: center;
  gap: 2px;
  border-radius: 5px 5px 0 0;
  background: linear-gradient(#0a50d8 0, #3a8cff 2px, #0a5ce8 5px, #0458e8 14px, #0668fa 20px, #0342c4 24px);
  color: #fff;
}
.titlebar h1 { flex: 1; font-size: 10px; line-height: 14px; font-weight: 700; text-shadow: 1px 1px 0 #0a2c88; }
.cap { width: 17px; height: 17px; border: 1px solid #dce8ff; border-radius: 2px; background: linear-gradient(135deg, #6c98f8, #2458dc); }
.cap svg { width: 15px; height: 15px; }
.close { background: linear-gradient(135deg, #f09078, #d43c14); }

.menubar { flex: none; height: 14px; display: flex; align-items: center; gap: 8px; padding: 0 2px 0 3px; font-family: "Liberation Sans", sans-serif; line-height: 14px; }
.menubar .icon14 { margin-right: -5px; }
.grow { flex: 1; }
.mdi { width: 13px; height: 12px; margin-left: -6px; background: #f6f4ec; }
.mdi svg { width: 12px; height: 12px; }

.toolrow { flex: none; height: 25px; display: flex; border-top: 1px solid #c8c4b4; box-shadow: inset 0 1px #fff; }
.toolrow + .toolrow { height: 28px; padding-bottom: 1px; border-bottom: 2px solid #8a887a; }
.toolbar { display: flex; align-items: center; justify-content: space-between; padding: 0 6px; border-right: 1px solid #aca899; box-shadow: inset 0 1px #fff, 1px 0 #fff; }
.standard, .props { width: 506px; }
.snap { width: 337px; }
.dims { width: 322px; }
.group { display: flex; }

.tb {
  flex: none;
  width: 19px;
  height: 19px;
  display: flex;
  align-items: center;
  justify-content: center;
  border: 1px solid;
  border-color: #fff #98968a #98968a #fff;
  background: #edebdf;
}
.tb svg { width: 16px; height: 16px; }
.help { font-size: 14px; font-weight: 700; color: #981818; }
.letter { font-family: "Liberation Serif", serif; font-size: 16px; font-weight: 700; }

.combo { height: 17px; display: flex; align-items: center; padding-left: 1px; border: 1px solid; border-color: #86847a #fff #fff #86847a; box-shadow: inset 1px 1px #aca899; color: #aca899; }
.combo svg { width: 12px; height: 12px; }
.combo .sample { width: 50px; }
.combo select { flex: 1; min-width: 0; appearance: none; opacity: 1; padding-left: 3px; line-height: 12px; }
.layer { width: 164px; }
.layer svg { margin-left: 1px; }
.color { width: 78px; }
.line { width: 152px; }
.drop { width: 12px; height: 13px; margin-right: 1px; display: grid; place-items: center; border: 1px solid; border-color: #fff #86847a #86847a #fff; }
.drop::before { content: ""; border: 3px solid transparent; border-top-color: #98968a; border-bottom: 0; }

.workspace { flex: 1; min-height: 0; display: flex; }
.palettes { flex: none; width: 62px; display: flex; align-items: flex-start; border-right: 1px solid #86847a; }
.palette { width: 30px; display: flex; flex-direction: column; padding: 0 0 4px 5px; border-right: 1px solid #aca899; border-bottom: 1px solid #aca899; box-shadow: 1px 1px #fff; }
.modify { width: 31px; padding-left: 6px; }
.palette .tb { height: 18px; }

.view { flex: 1; min-width: 0; display: grid; grid-template: 1fr 14px / 1fr 15px; }
.sheet { min-height: 0; display: grid; grid-template-columns: 83px 1fr 16px 66px; background: linear-gradient(to right, #868686 83px, transparent 83px), linear-gradient(to left, #868686 66px, #000 66px, #000 82px, #fff 82px); }
.drawing { grid-column: 2; width: 100%; height: 100%; min-height: 0; stroke: #303030; }
.drawing .cut { stroke: #c83020; }

.vscroll, .hscroll { display: flex; justify-content: space-between; background: #f6f5f0; }
.vscroll { flex-direction: column; width: 13px; }
.hscroll { padding: 1px 0; }
.vscroll button, .hscroll button { width: 13px; height: 12px; display: grid; place-items: center; border: 1px solid #e4ecfc; border-radius: 2px; background: #c4d4fa; }
.vscroll svg, .hscroll svg { width: 11px; height: 11px; stroke: #3c5490; stroke-width: 2; }
.vscroll .grip, .hscroll .grip { stroke: #8ea8e0; stroke-width: 1; }
.vscroll .thumb { margin-top: 64px; }

.command { flex: none; padding: 7px 1px 0 2px; border-top: 2px solid #5c5a54; background: linear-gradient(#ece9d8 3px, #5c5a54 3px, #5c5a54 5px, #ece9d8 5px); }
.log { height: 27px; display: flex; border: solid #404040; border-width: 1px 0 0 1px; background: #fff; font: 10px/12px "Liberation Mono", monospace; }
.lines { flex: 1; min-width: 0; padding-top: 1px; white-space: nowrap; overflow: hidden; }
.entry { height: 12px; display: flex; border-left: 1px solid #404040; border-top: 1px solid #c4c2b8; background: #fff; }
.entry input { flex: 1; min-width: 0; height: 11px; outline: 0; font: 10px/11px "Liberation Mono", monospace; }
.classic { display: flex; background: #f4f2ea; }
.classic button { width: 14px; display: grid; place-items: center; border: 1px solid; border-color: #fff #86847a #86847a #fff; background: #ece9d8; }
.classic svg { width: 11px; height: 11px; }
.classic .slide { width: 12px; }
.rail { width: 13px; }
.corner { width: 16px; background: #ece9d8; }

.taskbar { flex: none; height: 21px; display: flex; background: linear-gradient(#4c90f8 0, #2c66e4 3px, #245cdc 16px, #1c48b8 21px); color: #fff; }
.start { width: 74px; display: flex; align-items: center; gap: 3px; padding-left: 5px; border-radius: 0 8px 8px 0; background: linear-gradient(#68b468 0, #3c983c 4px, #349034 15px, #246c28 21px); box-shadow: 1px 0 2px #103880; font-size: 13px; line-height: 18px; font-weight: 700; font-style: italic; color: #fff; text-shadow: 1px 1px 1px #184818; }
.start svg { width: 17px; height: 17px; }
.quick { display: flex; align-items: center; gap: 4px; padding-left: 8px; }
.quick button, .quick svg, .task svg, .tray svg { width: 14px; height: 14px; }
.more { width: 30px; padding: 0 0 8px 12px; font-size: 11px; line-height: 12px; }
.tasks { flex: 1; min-width: 0; display: flex; gap: 1px; }
.task { flex: 1; min-width: 0; display: flex; align-items: center; gap: 2px; padding-left: 6px; margin-top: 1px; border: 1px solid #5a94f8; border-right-color: #1c4cb8; border-bottom: 0; border-radius: 2px; background: linear-gradient(#5c98fc 0, #3c7cf0 4px, #3474ec 16px, #2c64d8 20px); line-height: 12px; white-space: nowrap; }
.alert { background: #e47c10; border-color: #f0a040 #a85808 #a85808 #f0a040; }
.active { background: #1c4cb4; border-color: #143c94; }
.lang { width: 28px; padding-left: 8px; line-height: 21px; }
.tray { width: 249px; display: flex; align-items: center; padding-left: 7px; border-left: 1px solid #103c98; background: linear-gradient(#40b4f8 0, #1490e8 4px, #1288e4 16px, #0c6cc8 21px); }
.clock { flex: 1; display: flex; justify-content: space-between; padding: 0 6px 0 4px; font-family: "DejaVu Sans", sans-serif; font-size: 14px; line-height: 20px; }
```
